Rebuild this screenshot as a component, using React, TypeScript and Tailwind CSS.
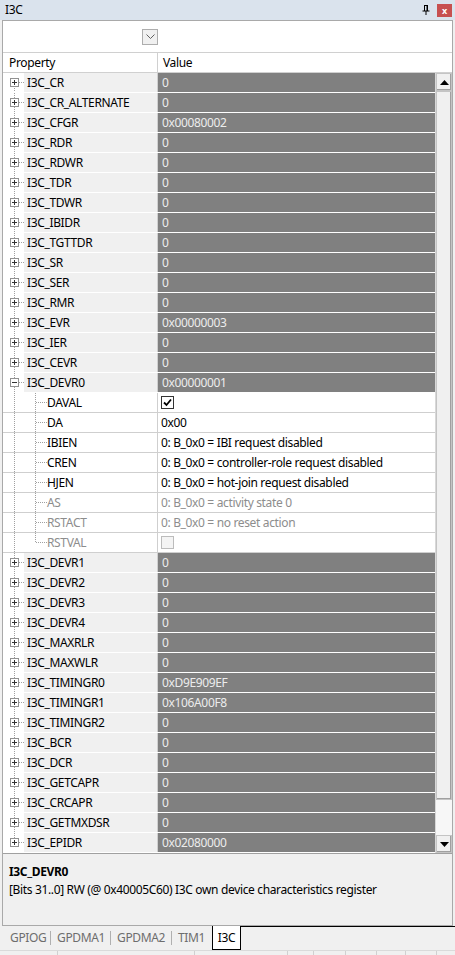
import { useState } from "react";

type Field = {
  name: string;
  value?: string;
  check?: boolean;
  disabled?: boolean;
};

type Register = {
  name: string;
  value: string;
  fields?: Field[];
};

const registers: Register[] = [
  { name: "I3C_CR", value: "0" },
  { name: "I3C_CR_ALTERNATE", value: "0" },
  { name: "I3C_CFGR", value: "0x00080002" },
  { name: "I3C_RDR", value: "0" },
  { name: "I3C_RDWR", value: "0" },
  { name: "I3C_TDR", value: "0" },
  { name: "I3C_TDWR", value: "0" },
  { name: "I3C_IBIDR", value: "0" },
  { name: "I3C_TGTTDR", value: "0" },
  { name: "I3C_SR", value: "0" },
  { name: "I3C_SER", value: "0" },
  { name: "I3C_RMR", value: "0" },
  { name: "I3C_EVR", value: "0x00000003" },
  { name: "I3C_IER", value: "0" },
  { name: "I3C_CEVR", value: "0" },
  {
    name: "I3C_DEVR0",
    value: "0x00000001",
    fields: [
      { name: "DAVAL", check: true },
      { name: "DA", value: "0x00" },
      { name: "IBIEN", value: "0: B_0x0 = IBI request disabled" },
      { name: "CREN", value: "0: B_0x0 = controller-role request disabled" },
      { name: "HJEN", value: "0: B_0x0 = hot-join request disabled" },
      { name: "AS", value: "0: B_0x0 = activity state 0", disabled: true },
      { name: "RSTACT", value: "0: B_0x0 = no reset action", disabled: true },
      { name: "RSTVAL", check: false, disabled: true },
    ],
  },
  { name: "I3C_DEVR1", value: "0" },
  { name: "I3C_DEVR2", value: "0" },
  { name: "I3C_DEVR3", value: "0" },
  { name: "I3C_DEVR4", value: "0" },
  { name: "I3C_MAXRLR", value: "0" },
  { name: "I3C_MAXWLR", value: "0" },
  { name: "I3C_TIMINGR0", value: "0xD9E909EF" },
  { name: "I3C_TIMINGR1", value: "0x106A00F8" },
  { name: "I3C_TIMINGR2", value: "0" },
  { name: "I3C_BCR", value: "0" },
  { name: "I3C_DCR", value: "0" },
  { name: "I3C_GETCAPR", value: "0" },
  { name: "I3C_CRCAPR", value: "0" },
  { name: "I3C_GETMXDSR", value: "0" },
  { name: "I3C_EPIDR", value: "0x02080000" },
];

// dotted tree lines + the little +/- box
const RegGutter = ({ first, last, open }: { first: boolean; last: boolean; open: boolean }) => (
  <svg width="21" height="19" className="shrink-0">
    <line x1="11.5" y1={first ? 9 : 0} x2="11.5" y2={last ? 9 : 19} stroke="#a0a0a0" strokeDasharray="1 1" />
    <line x1="16" y1="9.5" x2="21" y2="9.5" stroke="#a0a0a0" strokeDasharray="1 1" />
    <rect x="7.5" y="5.5" width="8" height="8" fill="#fff" stroke="#919191" />
    <line x1="9" y1="9.5" x2="14" y2="9.5" stroke="#333" />
    {!open && <line x1="11.5" y1="7" x2="11.5" y2="12" stroke="#333" />}
  </svg>
);

const FieldGutter = ({ last }: { last: boolean }) => (
  <svg width="44" height="19" className="shrink-0">
    <line x1="11.5" y1="0" x2="11.5" y2="19" stroke="#a0a0a0" strokeDasharray="1 1" />
    <line x1="32.5" y1="0" x2="32.5" y2={last ? 9 : 19} stroke="#a0a0a0" strokeDasharray="1 1" />
    <line x1="33" y1="9.5" x2="44" y2="9.5" stroke="#a0a0a0" strokeDasharray="1 1" />
  </svg>
);

const CheckBox = ({ checked, disabled }: { checked?: boolean; disabled?: boolean }) => (
  <span
    className={`flex h-[13px] w-[13px] items-center justify-center border ${
      disabled ? "border-[#bcbcbc] bg-[#f4f4f4]" : "border-[#333] bg-white"
    }`}
  >
    {checked && (
      <svg width="9" height="9" viewBox="0 0 9 9">
        <path d="M1 4.5 L3.5 7 L8 1.5" fill="none" stroke="#000" strokeWidth="1.8" />
      </svg>
    )}
  </span>
);

const Sep = () => <span className="h-[14px] w-px shrink-0 bg-[#b0b0b0]" />;

const App = () => {
  const [openReg] = useState<string>("I3C_DEVR0");

  return (
    <div
      className="flex h-[955px] w-[455px] flex-col overflow-hidden bg-[#f0f0f0] text-[12px] tracking-[-0.35px] text-black"
      style={{ fontFamily: '"Noto Sans", "Open Sans", sans-serif' }}
    >
      {/* title bar */}
      <div className="flex h-[20px] shrink-0 items-center justify-between bg-[#dae3ed] pl-[5px] pr-[3px]">
        <span className="leading-none">I3C</span>
        <div className="flex items-center gap-[7px]">
          <svg width="8" height="10" viewBox="0 0 8 10">
            <path d="M2 0.5 H6 M2.5 0.5 V6 M5.5 0.5 V6 M0.5 6 H7.5 M4 6 V10" fill="none" stroke="#000" />
            <rect x="4.5" y="0.5" width="1" height="5.5" fill="#000" />
          </svg>
          <span className="flex h-[13px] w-[15px] items-center justify-center bg-[#c75050] text-[9px] font-bold leading-none text-white">
            x
          </span>
        </div>
      </div>

      {/* property grid */}
      <div className="mx-[2px] flex flex-1 flex-col border border-[#a9a9a9] bg-white">
        <div className="flex h-[31px] shrink-0 items-center pl-[139px] pt-[1px]">
          <div className="flex h-[16px] w-[16px] items-center justify-center border border-[#adadad] bg-[#f0f0f0]">
            <svg width="9" height="6" viewBox="0 0 9 6">
              <path d="M0.5 0.5 L4.5 4.5 L8.5 0.5" fill="none" stroke="#606060" />
            </svg>
          </div>
        </div>

        <div className="flex h-[21px] shrink-0 border-y border-[#d0d0d0]">
          <div className="flex w-[155px] items-center border-r border-[#d0d0d0] pl-[6px]">Property</div>
          <div className="flex items-center pl-[5px]">Value</div>
        </div>

        <div className="flex h-[780px] shrink-0">
          <div className="flex flex-1 flex-col">
            {registers.map((reg, i) => {
              const open = reg.name === openReg;
              return (
                <div key={reg.name}>
                  <div className="flex h-[20px] border-b border-white">
                    <div className="flex w-[155px] items-center border-r border-[#d0d0d0]">
                      <RegGutter first={i === 0} last={i === registers.length - 1} open={open} />
                      <div className="flex h-full flex-1 items-center bg-[#f0f0f0] pl-[3px] whitespace-nowrap">
                        {reg.name}
                      </div>
                    </div>
                    <div className="flex flex-1 items-center bg-[#808080] pl-[4px] text-[#ececec]">
                      {reg.value}
                    </div>
                  </div>
                  {open &&
                    reg.fields?.map((f, j) => (
                      <div key={f.name} className="flex h-[20px] border-b border-[#cfcfcf]">
                        <div className="flex w-[155px] items-center border-r border-[#cfcfcf]">
                          <FieldGutter last={j === (reg.fields?.length ?? 0) - 1} />
                          <span className={f.disabled ? "text-[#8d8d8d]" : ""}>{f.name}</span>
                        </div>
                        <div
                          className={`flex flex-1 items-center pl-[3px] whitespace-nowrap ${
                            f.disabled ? "text-[#8d8d8d]" : ""
                          }`}
                        >
                          {f.check !== undefined ? <CheckBox checked={f.check} disabled={f.disabled} /> : f.value}
                        </div>
                      </div>
                    ))}
                </div>
              );
            })}
          </div>

          {/* scrollbar */}
          <div className="flex w-[17px] flex-col border-l border-[#d8d8d8] bg-[#f7f7f7]">
            <div className="flex h-[18px] items-center justify-center border border-[#c4c4c4] bg-[#f0f0f0] shadow-[inset_-1px_-1px_0_#a0a0a0]">
              <svg width="9" height="5" viewBox="0 0 9 5">
                <path d="M4.5 0 L9 5 H0 Z" fill="#000" />
              </svg>
            </div>
            <div className="h-[709px] border border-[#c4c4c4] bg-[#f0f0f0] shadow-[inset_-1px_-1px_0_#a0a0a0]" />
            <div className="flex-1" />
            <div className="flex h-[18px] items-center justify-center border border-[#c4c4c4] bg-[#f0f0f0] shadow-[inset_-1px_-1px_0_#a0a0a0]">
              <svg width="9" height="5" viewBox="0 0 9 5">
                <path d="M0 0 H9 L4.5 5 Z" fill="#000" />
              </svg>
            </div>
          </div>
        </div>

        {/* description */}
        <div className="flex-1 border-t border-[#a0a0a0] bg-[#f0f0f0] px-[6px] pt-[9px]">
          <div className="font-bold leading-[18px]">I3C_DEVR0</div>
          <div className="leading-[18px]">[Bits 31..0] RW (@ 0x40005C60) I3C own device characteristics register</div>
        </div>
      </div>

      {/* tabs */}
      <div className="flex h-[24px] shrink-0">
        <div className="flex h-full items-center pl-[10px] text-[#6d6d6d]">
          <span className="w-[40px]">GPIOG</span>
          <Sep />
          <span className="w-[59px] pl-[6px]">GPDMA1</span>
          <Sep />
          <span className="w-[60px] pl-[6px]">GPDMA2</span>
          <Sep />
          <span className="w-[40px] pl-[6px]">TIM1</span>
        </div>
        <div className="flex h-full w-[29px] items-center justify-center border-x border-b border-black bg-white">
          I3C
        </div>
        <div className="h-full flex-1 border-t border-black" />
      </div>

      {/* status strip */}
      <div className="flex h-[5px] shrink-0 border-t border-[#dadada] bg-[#f0f0f0]">
        <div className="w-[58px] border-r border-[#d0d0d0]" />
        <div className="w-[137px] border-r border-[#d0d0d0]" />
        <div className="w-[93px] border-r border-[#d0d0d0]" />
        <div className="w-[26px] border-r border-[#d0d0d0]" />
        <div className="w-[32px] border-r border-[#d0d0d0]" />
        <div className="w-[31px] border-r border-[#d0d0d0]" />
        <div className="w-[29px] border-r border-[#d0d0d0]" />
        <div className="w-[31px] border-r border-[#d0d0d0]" />
      </div>
    </div>
  );
};

export default App;
